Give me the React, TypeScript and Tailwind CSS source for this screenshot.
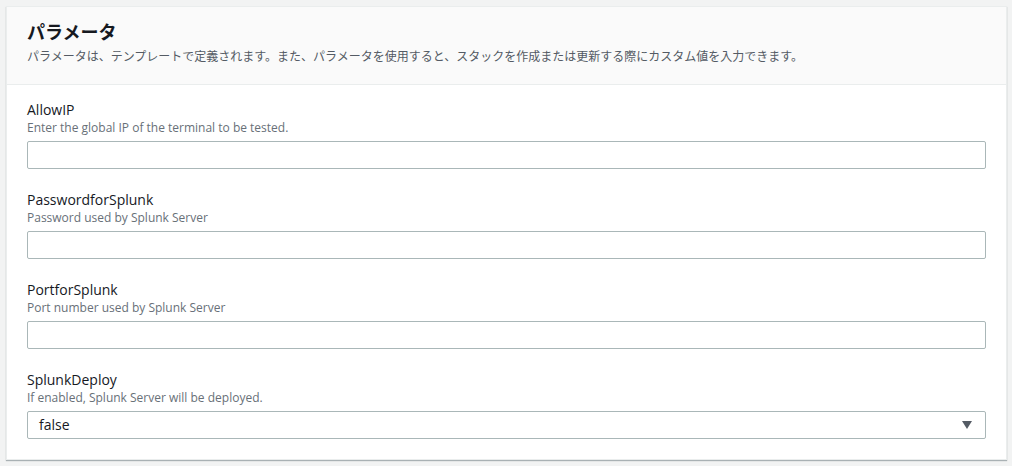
const fields = [
  { name: 'AllowIP', desc: 'Enter the global IP of the terminal to be tested.' },
  { name: 'PasswordforSplunk', desc: 'Password used by Splunk Server' },
  { name: 'PortforSplunk', desc: 'Port number used by Splunk Server' },
];

export default function App() {
  return (
    <div
      className="min-h-screen w-full bg-[#f2f3f3] pt-[6px] pr-[5px] pb-[6px] pl-[6px] text-[#16191f]"
      style={{ fontFamily: '"Open Sans", "Noto Sans CJK JP", sans-serif' }}
    >
      <div className="border border-[#eaeded] bg-white shadow-[0_1px_1px_0_rgba(0,28,36,0.3)]">
        <div className="border-b border-[#eaeded] bg-[#fafafa] px-5 pt-[13px] pb-[19px]">
          <h2 className="text-[18px] leading-[24px] font-bold">パラメータ</h2>
          <p className="mt-[5px] text-[12px] leading-[16px] text-[#545b64]">
            パラメータは、テンプレートで定義されます。また、パラメータを使用すると、スタックを作成または更新する際にカスタム値を入力できます。
          </p>
        </div>
        <div className="flex flex-col gap-[21px] px-5 pt-[15px] pb-5">
          {fields.map((f) => (
            <div key={f.name}>
              <div className="text-[14px] leading-[20px]">{f.name}</div>
              <div className="text-[12px] leading-[16px] text-[#687078]">{f.desc}</div>
              <input
                type="text"
                className="mt-[5px] block h-[28px] w-full rounded-[2px] border border-[#aab7b8] bg-white px-[10px] text-[14px] outline-none"
              />
            </div>
          ))}
          <div>
            <div className="text-[14px] leading-[20px]">SplunkDeploy</div>
            <div className="text-[12px] leading-[16px] text-[#687078]">
              If enabled, Splunk Server will be deployed.
            </div>
            <div className="mt-[5px] flex h-[28px] w-full items-center justify-between rounded-[2px] border border-[#aab7b8] bg-white pr-[13px] pl-[11px]">
              <span className="text-[14px] leading-[20px]">false</span>
              <svg width="10" height="8" viewBox="0 0 10 8">
                <path d="M0 0 L10 0 L5 8 Z" fill="#545b64" />
              </svg>
            </div>
          </div>
        </div>
      </div>
    </div>
  );
}
